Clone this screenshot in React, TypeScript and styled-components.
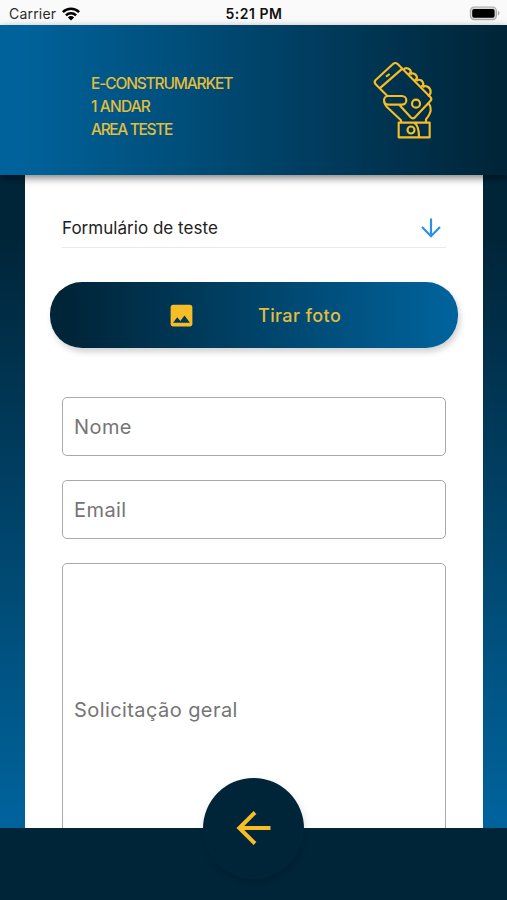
import React from "react";
import styled, { createGlobalStyle } from "styled-components";

const navy = "#002539";
const blue = "#00629a";
const gold = "#f6bd27";

const GlobalStyle = createGlobalStyle`
  * { box-sizing: border-box; }
  body { margin: 0; overflow: hidden; }
  input, textarea, button { font: inherit; }
`;

const Screen = styled.div`
  width: 507px;
  height: 900px;
  display: flex;
  flex-direction: column;
  overflow: hidden;
  font-family: Inter, "Open Sans", sans-serif;
`;

const StatusBar = styled.div`
  flex: 0 0 25px;
  display: grid;
  grid-template-columns: 1fr auto 1fr;
  align-items: center;
  padding: 2px 7px 0 9px;
  background: #fafafa;
  color: #111;
  font-size: 14px;
`;

const Carrier = styled.div`
  display: flex;
  align-items: center;
  gap: 6px;
  color: #2b2b2b;
  letter-spacing: 0.2px;
`;

const Clock = styled.div`
  margin-left: -1px;
  font-weight: 600;
  font-size: 14px;
  letter-spacing: 0.5px;
`;

const BatterySlot = styled.div`
  display: flex;
  justify-content: flex-end;
`;

const Header = styled.header`
  flex: 0 0 150px;
  z-index: 1;
  display: flex;
  justify-content: space-between;
  padding: 27px 62px 0 91px;
  background: linear-gradient(90deg, ${blue} 5%, ${navy} 98%);
  box-shadow: 0 3px 8px rgba(0, 0, 0, 0.5);
`;

const Location = styled.div`
  padding-top: 20px;
  color: #e3bd3c;
  font-size: 15.5px;
  font-weight: 500;
  line-height: 23px;
`;

const Line = styled.div<{ $spacing: number }>`
  letter-spacing: ${(p) => p.$spacing}px;
  white-space: nowrap;
`;

const Body = styled.main`
  flex: 1;
  min-height: 0;
  padding: 0 24px 0 25px;
  overflow: hidden;
  background: linear-gradient(180deg, ${navy} 10%, ${blue} 97%);
`;

const Sheet = styled.form`
  height: 100%;
  padding: 36px 37px 0;
  display: flex;
  flex-direction: column;
  overflow: hidden;
  background: #fff;
`;

const FormPicker = styled.div`
  flex: 0 0 37px;
  display: flex;
  justify-content: space-between;
  align-items: center;
  padding: 0 4px 3px 0;
  border-bottom: 1px solid #e9e9e9;
  color: #222;
  font-size: 17px;
  letter-spacing: 0.03px;
`;

const PhotoButton = styled.button`
  flex: 0 0 66px;
  margin: 34px -12px 49px;
  padding: 0 0 0 117px;
  display: flex;
  align-items: center;
  border: 0;
  border-radius: 32px;
  background: linear-gradient(90deg, ${navy} 5%, ${blue} 97%);
  box-shadow: 2px 4px 6px rgba(0, 0, 0, 0.18);
  color: #e3bd3c;
  font-size: 18px;
  font-weight: 500;
  letter-spacing: 0.4px;
`;

const ButtonLabel = styled.span`
  margin-left: 62px;
`;

const Field = styled.input<{ $tall?: boolean }>`
  flex: 0 0 ${(p) => (p.$tall ? 294 : 59)}px;
  width: 384px;
  margin-bottom: 24px;
  padding: 0 11px;
  border: 1px solid #a9a9a9;
  border-radius: 5px;
  outline: 0;
  background: transparent;
  font-size: 20px;
  font-weight: 400;
  letter-spacing: 0.42px;
  &::placeholder { color: #757575; opacity: 1; }
`;

const Footer = styled.footer`
  flex: 0 0 72px;
  z-index: 2;
  display: flex;
  justify-content: center;
  background: ${navy};
`;

const BackButton = styled.button`
  width: 101px;
  height: 101px;
  margin-top: -50px;
  padding: 0 0 1px;
  display: grid;
  place-items: center;
  border: 0;
  border-radius: 50%;
  background: ${navy};
  box-shadow: 1px 4px 8px rgba(0, 0, 0, 0.15);
`;

const WifiIcon = () => (
  <svg width="18" height="14" viewBox="0 0 18 14" fill="none" stroke="#000" strokeWidth="2.5">
    <path d="M.9 5.2a11.5 11.5 0 0 1 16.2 0" />
    <path d="M3.9 8.3a7.2 7.2 0 0 1 10.2 0" />
    <path d="M9 13.6 5.9 10.4a4.4 4.4 0 0 1 6.2 0Z" fill="#000" stroke="none" />
  </svg>
);

const BatteryIcon = () => (
  <svg width="31" height="15" viewBox="0 0 31 15">
    <rect x="1.4" y="1" width="26" height="12.6" rx="3.8" fill="#d8d8d8" stroke="#ababab" strokeWidth="1.2" />
    <rect x="3.2" y="2.9" width="22.4" height="8.8" rx="2" fill="#000" />
    <path d="M28.9 5v4.4c1-.4 1.6-1.2 1.6-2.2s-.6-1.8-1.6-2.2Z" fill="#ababab" />
  </svg>
);

const HandPhoneIcon = () => (
  <svg width="80" height="95" viewBox="0 0 240 285" fill="none" stroke={gold} strokeWidth="6.4" strokeLinejoin="round">
    <path d="M68 133 32 97Q26 90 32 84L84 36Q91 30 98 36L196 135Q202 141 196 147L150 196Q143 202 137 196L104 160" />
    <path d="M44 109 112 50M63 74 74 66" />
    <path d="M70 132H111a13 13 0 0 1 0 26H70a13 13 0 0 1 0-26Z" />
    <path d="M58 148Q57 156 65 164L108 205V212M183 212V202C193 189 197 184 197 173C198 164 194 158 191 154" />
    <path d="M115 54C122 44 138 49 138 62M136 68C143 60 157 66 156 81M154 87C162 79 176 85 175 100M173 106C181 98 197 105 197 120Q197 128 188 132" />
    <path d="M138 60 131 67M156 79 149 86M175 98 168 105" />
    <circle cx="153" cy="155" r="12" />
    <path d="M101 212H194V256H101ZM148 213Q162 220 162 256" />
    <circle cx="138" cy="234" r="10.5" />
  </svg>
);

const DownArrow = () => (
  <svg width="22" height="22" viewBox="0 0 22 22" fill="none" stroke="#2b90e8" strokeWidth="2.2">
    <path d="M11 1.5V19M2 10l9 9.2 9-9.2" />
  </svg>
);

const PhotoIcon = () => (
  <svg width="29" height="29" viewBox="0 0 24 24" fill={gold}>
    <path d="M21 19V5c0-1.1-.9-2-2-2H5c-1.1 0-2 .9-2 2v14c0 1.1.9 2 2 2h14c1.1 0 2-.9 2-2zM8.5 13.5l2.5 3.01L14.5 12l4.5 6H5l3.5-4.5z" />
  </svg>
);

const BackArrow = () => (
  <svg width="35" height="34" viewBox="0 0 35 34" fill="none" stroke={gold} strokeWidth="4">
    <path d="M34.5 17H3M19 1.5 3.3 17 19 32.5" />
  </svg>
);

export default function App() {
  return (
    <>
      <GlobalStyle />
      <Screen>
        <StatusBar>
          <Carrier>Carrier <WifiIcon /></Carrier>
          <Clock>5:21 PM</Clock>
          <BatterySlot><BatteryIcon /></BatterySlot>
        </StatusBar>
        <Header>
          <Location>
            <Line $spacing={-1.15}>E-CONSTRUMARKET</Line>
            <Line $spacing={-0.85}>1 ANDAR</Line>
            <Line $spacing={-1.35}>AREA TESTE</Line>
          </Location>
          <HandPhoneIcon />
        </Header>
        <Body>
          <Sheet>
            <FormPicker><span>Formulário de teste</span><DownArrow /></FormPicker>
            <PhotoButton type="button"><PhotoIcon /><ButtonLabel>Tirar foto</ButtonLabel></PhotoButton>
            <Field placeholder="Nome" />
            <Field placeholder="Email" />
            <Field placeholder="Solicitação geral" $tall />
          </Sheet>
        </Body>
        <Footer>
          <BackButton type="button" aria-label="Voltar"><BackArrow /></BackButton>
        </Footer>
      </Screen>
    </>
  );
}
